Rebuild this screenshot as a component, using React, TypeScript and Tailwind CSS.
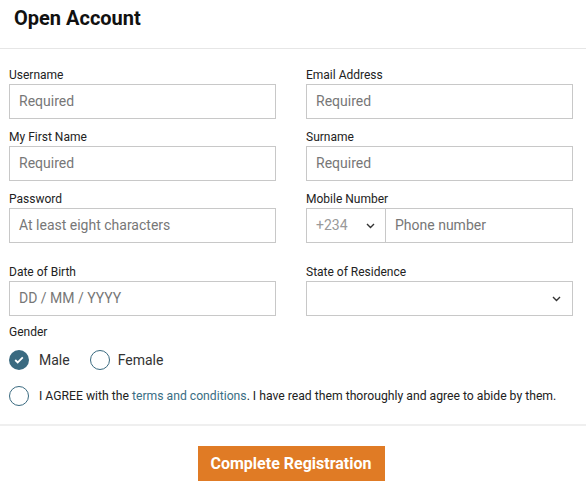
import React from "react";

const Chevron = () => (
  <svg width="9" height="6" viewBox="0 0 9 6" fill="none">
    <path d="M1 1l3.5 3.5L8 1" stroke="#333" strokeWidth="1.4" />
  </svg>
);

const Field = ({ label, placeholder }: { label: string; placeholder: string }) => (
  <div className="flex flex-col">
    <label className="text-[12px] leading-[14px] text-[#222] mb-[2px]">{label}</label>
    <div className="h-[35px] border border-[#c8c8c8] flex items-center px-[9px] text-[14px] text-[#777]">
      {placeholder}
    </div>
  </div>
);

export default function App() {
  return (
    <div className="w-[586px] h-[491px] bg-white" style={{ fontFamily: "Roboto, 'Liberation Sans', sans-serif" }}>
      <div className="h-[49px] border-b border-[#e6e6e6] flex items-center px-[14px]">
        <h1 className="text-[20px] font-bold text-[#111] leading-none -mt-[12px]">Open Account</h1>
      </div>
      <div className="pl-[9px] pr-[13px] pt-[19px]">
        <div className="grid grid-cols-2 gap-x-[30px] gap-y-[11px]">
          <Field label="Username" placeholder="Required" />
          <Field label="Email Address" placeholder="Required" />
          <Field label="My First Name" placeholder="Required" />
          <Field label="Surname" placeholder="Required" />
          <Field label="Password" placeholder="At least eight characters" />
          <div className="flex flex-col">
            <label className="text-[12px] leading-[14px] text-[#222] mb-[2px]">Mobile Number</label>
            <div className="h-[35px] flex">
              <div className="w-[80px] border border-[#c8c8c8] flex items-center justify-between pl-[9px] pr-[10px] text-[14px] text-[#999]">
                <span>+234</span>
                <Chevron />
              </div>
              <div className="flex-1 border border-l-0 border-[#c8c8c8] flex items-center px-[9px] text-[14px] text-[#777]">
                Phone number
              </div>
            </div>
          </div>
          <div className="mt-[11px]">
            <Field label="Date of Birth" placeholder="DD / MM / YYYY" />
          </div>
          <div className="mt-[11px] flex flex-col">
            <label className="text-[12px] leading-[14px] text-[#222] mb-[2px]">State of Residence</label>
            <div className="h-[35px] border border-[#c8c8c8] flex items-center justify-end pr-[11px]">
              <Chevron />
            </div>
          </div>
        </div>
        <div className="mt-[9px] text-[12px] leading-[14px] text-[#222]">Gender</div>
        <div className="mt-[11px] flex items-center h-[20px]">
          <span className="w-[20px] h-[20px] rounded-full bg-[#3a6a80] flex items-center justify-center">
            <svg width="10" height="8" viewBox="0 0 10 8" fill="none">
              <path d="M1.2 4l2.5 2.4L8.8 1.4" stroke="white" strokeWidth="1.8" />
            </svg>
          </span>
          <span className="ml-[10px] text-[14px] text-[#333]">Male</span>
          <span className="ml-[20px] w-[20px] h-[20px] rounded-full border border-[#3a6a80]"></span>
          <span className="ml-[8px] text-[14px] text-[#333]">Female</span>
        </div>
        <div className="mt-[16px] flex items-center h-[20px]">
          <span className="w-[20px] h-[20px] rounded-full border border-[#3a6a80] shrink-0"></span>
          <span className="ml-[10px] text-[12.2px] text-[#222] whitespace-nowrap">
            I AGREE with the <span className="text-[#3a6e84]">terms and conditions</span>. I have read them thoroughly and agree to abide by them.
          </span>
        </div>
      </div>
      <div className="mt-[18px] border-t-2 border-[#efefef]"></div>
      <div className="flex justify-center pt-[20px] pl-[9px] pr-[13px]">
        <button className="w-[187px] h-[35px] bg-[#e07b25] text-white text-[16px] font-bold">
          Complete Registration
        </button>
      </div>
    </div>
  );
}
